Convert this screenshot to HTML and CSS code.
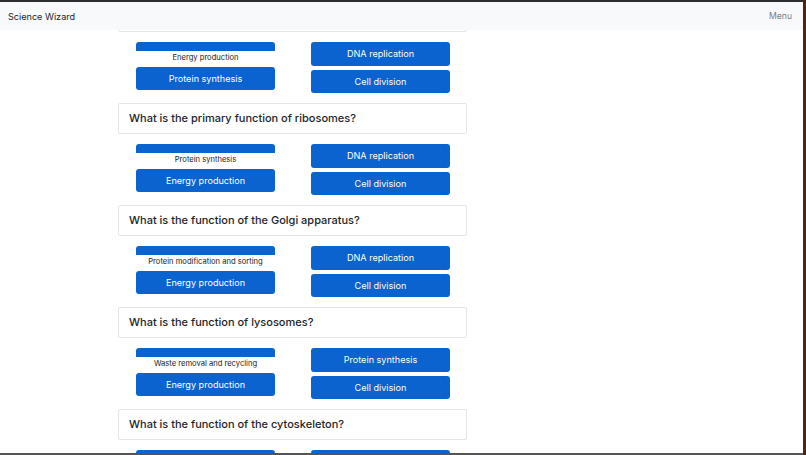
FILE: index.html
```html
<!DOCTYPE html>
<html lang="en">
<head>
<meta charset="utf-8">
<title>Science Wizard</title>
<link rel="stylesheet" href="styles.css">
</head>
<body>
<div class="window">
  <nav class="navbar">
    <span class="brand">Science Wizard</span>
    <span class="menu">Menu</span>
  </nav>
  <main class="quiz">
    <section class="question"><h2>What is the function of mitochondria?</h2></section>
    <div class="answers">
      <div class="col">
        <div class="strip"></div>
        <div class="label">Energy production</div>
        <button class="btn">Protein synthesis</button>
      </div>
      <div class="col right">
        <button class="btn">DNA replication</button>
        <button class="btn">Cell division</button>
      </div>
    </div>

    <section class="question"><h2>What is the primary function of ribosomes?</h2></section>
    <div class="answers">
      <div class="col">
        <div class="strip"></div>
        <div class="label">Protein synthesis</div>
        <button class="btn">Energy production</button>
      </div>
      <div class="col right">
        <button class="btn">DNA replication</button>
        <button class="btn">Cell division</button>
      </div>
    </div>

    <section class="question"><h2>What is the function of the Golgi apparatus?</h2></section>
    <div class="answers">
      <div class="col">
        <div class="strip"></div>
        <div class="label">Protein modification and sorting</div>
        <button class="btn">Energy production</button>
      </div>
      <div class="col right">
        <button class="btn">DNA replication</button>
        <button class="btn">Cell division</button>
      </div>
    </div>

    <section class="question"><h2>What is the function of lysosomes?</h2></section>
    <div class="answers">
      <div class="col">
        <div class="strip"></div>
        <div class="label">Waste removal and recycling</div>
        <button class="btn">Energy production</button>
      </div>
      <div class="col right">
        <button class="btn">Protein synthesis</button>
        <button class="btn">Cell division</button>
      </div>
    </div>

    <section class="question"><h2>What is the function of the cytoskeleton?</h2></section>
    <div class="answers">
      <div class="col">
        <div class="strip"></div>
      </div>
      <div class="col right">
        <div class="btn"></div>
      </div>
    </div>
  </main>
</div>
</body>
</html>
```
FILE: styles.css
```css
* { box-sizing: border-box; }
html, body { margin: 0; padding: 0; }
body {
  background: #5a2016;
  font-family: Inter, "Liberation Sans", Arial, sans-serif;
  width: 806px;
  height: 455px;
  overflow: hidden;
}
.window {
  position: relative;
  width: 803px;
  height: 455px;
  background: #fff;
  border-top: 2px solid #2e2e2e;
  border-bottom: 2px solid #555;
  overflow: hidden;
}
.navbar {
  position: absolute;
  top: 0;
  left: 0;
  right: 0;
  height: 28px;
  background: #f8f9fa;
  display: flex;
  align-items: center;
  justify-content: space-between;
  padding: 0 11px 0 8px;
  z-index: 2;
}
.brand { font-size: 9.1px; color: #212529; }
.menu { font-size: 8.6px; color: #7a7d80; }
.quiz {
  margin: -1px 0 0 118px;
  width: 349px;
  display: flex;
  flex-direction: column;
}
.question {
  height: 31px;
  border: 1px solid #e3e5e8;
  border-radius: 2px;
  padding: 0 10px 1px;
  display: flex;
  align-items: center;
}
.question h2 {
  margin: 0;
  font-size: 11px;
  font-weight: 500;
  color: #212529;
}
.answers {
  display: grid;
  grid-template-columns: 139px 139px;
  column-gap: 36px;
  margin: 10px 18px;
  height: 51px;
}
.col { display: flex; flex-direction: column; }
.right { gap: 4px; }
.strip {
  height: 9px;
  background: #0a63cf;
  border-radius: 3px 3px 0 0;
}
.label {
  height: 15px;
  margin-bottom: 1px;
  font-size: 7.6px;
  color: #222;
  text-align: center;
  line-height: 14px;
}
.btn {
  height: 23px;
  padding: 0 0 1px;
  border: 0;
  border-radius: 3px;
  background: #0a63cf;
  color: #fff;
  font-family: inherit;
  font-size: 9.1px;
  text-align: center;
}
.right .btn:first-child { height: 24px; }
```
